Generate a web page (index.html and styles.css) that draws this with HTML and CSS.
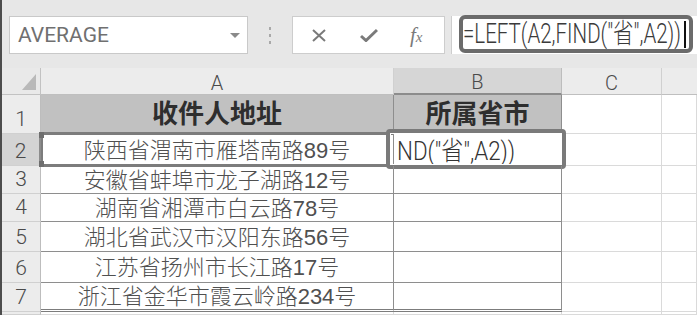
FILE: index.html
```html
<!DOCTYPE html>
<html>
<head>
    <title>AVERAGE - 收件人地址</title>
    <link rel="stylesheet" href="styles.css">
</head>
<body>
    <div class="window">
        <!-- Name box + formula bar -->
        <div class="toolbar">
            <div class="name-box">
                <span class="name-text">AVERAGE</span>
                <span class="caret"></span>
            </div>
            <div class="grip"><i></i><i></i><i></i></div>
            <div class="fx-buttons">
                <svg class="btn-icon" width="14" height="13" viewBox="0 0 14 13">
                    <path d="M1 1 L13 12 M13 1 L1 12" stroke="#7a7a7a" stroke-width="2" fill="none"/>
                </svg>
                <svg class="btn-icon" width="18" height="14" viewBox="0 0 18 14">
                    <path d="M1 8 L6 12.5 L17 2" stroke="#7a7a7a" stroke-width="3" fill="none"/>
                </svg>
                <span class="fx">f<span class="fx-x">x</span></span>
            </div>
            <div class="formula-bar">
                <div class="formula-edit">
                    <span class="formula-text">=LEFT(A2,FIND("省",A2))</span>
                    <span class="cursor"></span>
                </div>
            </div>
        </div>

        <!-- Worksheet -->
        <div class="sheet">
            <div class="corner"><span class="select-all"></span></div>
            <div class="col-head">A</div>
            <div class="col-head active">B</div>
            <div class="col-head">C</div>
            <div class="col-head last"></div>

            <div class="row-head">1</div>
            <div class="cell tbl title">收件人地址</div>
            <div class="cell tbl title">所属省市</div>
            <div class="cell"></div>
            <div class="cell"></div>

            <div class="row-head active">2</div>
            <div class="cell tbl ref">陕西省渭南市雁塔南路89号
                <span class="ref-box"><i class="h-top"></i><i class="h-bot"></i></span>
            </div>
            <div class="cell tbl editing">
                <span class="edit-text">ND("省",A2))</span>
                <span class="active-box"></span>
            </div>
            <div class="cell"></div>
            <div class="cell"></div>

            <div class="row-head">3</div>
            <div class="cell tbl">安徽省蚌埠市龙子湖路12号</div>
            <div class="cell tbl"></div>
            <div class="cell"></div>
            <div class="cell"></div>

            <div class="row-head">4</div>
            <div class="cell tbl">湖南省湘潭市白云路78号</div>
            <div class="cell tbl"></div>
            <div class="cell"></div>
            <div class="cell"></div>

            <div class="row-head">5</div>
            <div class="cell tbl">湖北省武汉市汉阳东路56号</div>
            <div class="cell tbl"></div>
            <div class="cell"></div>
            <div class="cell"></div>

            <div class="row-head">6</div>
            <div class="cell tbl">江苏省扬州市长江路17号</div>
            <div class="cell tbl"></div>
            <div class="cell"></div>
            <div class="cell"></div>

            <div class="row-head">7</div>
            <div class="cell tbl end">浙江省金华市霞云岭路234号</div>
            <div class="cell tbl end"></div>
            <div class="cell"></div>
            <div class="cell"></div>

            <div class="row-head"></div>
            <div class="cell"></div>
            <div class="cell"></div>
            <div class="cell"></div>
            <div class="cell"></div>
        </div>
    </div>
</body>
</html>
```

FILE: styles.css
```css
body {
    margin: 0;
    padding: 0;
    background: #e7e7e7;
    overflow: hidden;
    font-family: "Liberation Sans", "Noto Sans CJK SC", sans-serif;
}

.window {
    width: 697px;
    height: 315px;
    box-sizing: border-box;
    border-left: 2px solid #4d4d4d;
    overflow: hidden;
    display: flex;
    flex-direction: column;
}

/* ---------- toolbar ---------- */

.toolbar {
    height: 68px;
    flex-shrink: 0;
    display: flex;
    align-items: flex-start;
    padding: 16px 0 0 7px;
    box-sizing: border-box;
    background: #e7e7e7;
}

.name-box {
    width: 239px;
    height: 38px;
    box-sizing: border-box;
    background: #fff;
    border: 1px solid #c9c9c9;
    display: flex;
    align-items: center;
    padding: 0 7px 0 8px;
}

.name-text {
    font-family: Roboto, sans-serif;
    font-size: 21px;
    color: #707070;
    flex-grow: 1;
}

.caret {
    width: 0;
    height: 0;
    border-left: 5px solid transparent;
    border-right: 5px solid transparent;
    border-top: 5px solid #8a8a8a;
}

.grip {
    width: 44px;
    height: 38px;
    display: flex;
    flex-direction: column;
    align-items: center;
    justify-content: center;
    gap: 4px;
}

.grip i {
    width: 2px;
    height: 3px;
    background: #a9a9a9;
}

.fx-buttons {
    width: 153px;
    height: 38px;
    box-sizing: border-box;
    background: #fff;
    border: 1px solid #cdcdcd;
    display: flex;
    align-items: center;
    padding: 0 0 0 19px;
    gap: 34px;
}

.fx {
    font-family: "Liberation Serif", serif;
    font-style: italic;
    font-size: 21px;
    color: #7a7a7a;
    margin-left: -2px;
}

.fx-x {
    font-size: 15px;
}

.formula-bar {
    flex-grow: 1;
    height: 38px;
    margin-left: 6px;
    background: #fff;
    border-left: 1px solid #cdcdcd;
    padding-left: 7px;
}

.formula-edit {
    position: relative;
    width: 234px;
    height: 38px;
    margin-top: -1px;
    box-sizing: border-box;
    border: 4px solid #6b6b6b;
    border-radius: 6px;
    overflow: hidden;
    display: flex;
    align-items: center;
}

.formula-text {
    display: inline-block;
    font-family: Roboto, "Noto Sans CJK SC", sans-serif;
    font-size: 27px;
    font-weight: 300;
    line-height: 30px;
    color: #3a3a3a;
    white-space: nowrap;
    transform: scaleX(0.76);
    transform-origin: left center;
}

.cursor {
    position: absolute;
    right: 3px;
    top: 2px;
    width: 2px;
    height: 27px;
    background: #111;
}

/* ---------- worksheet ---------- */

.sheet {
    flex-grow: 1;
    display: grid;
    grid-template-columns: 39px 353px 168px 100px 1fr;
    grid-template-rows: 27px 39px 32px 28px 28px 30px 31px 29px 1fr;
    background: #fff;
}

.corner {
    background: #e9e9e9;
    border-right: 1px solid #c2c2c2;
    border-bottom: 1px solid #c2c2c2;
    display: flex;
    justify-content: flex-end;
    align-items: flex-end;
    padding: 0 4px 4px 0;
}

.select-all {
    width: 0;
    height: 0;
    border-left: 14px solid transparent;
    border-bottom: 16px solid #b9b9b9;
}

.col-head {
    background: #ececec;
    border-right: 1px solid #d0d0d0;
    border-bottom: 1px solid #bfbfbf;
    font-family: Roboto, sans-serif;
    font-size: 20px;
    font-weight: 300;
    line-height: 22px;
    color: #4a4a4a;
    display: flex;
    justify-content: center;
    align-items: center;
    padding-top: 3px;
    box-sizing: border-box;
}

.col-head.active {
    background: #d6d6d6;
    border-bottom: 2px solid #8c8c8c;
    border-right-color: #bdbdbd;
}

.col-head.last {
    border-right: none;
}

.row-head {
    background: #ececec;
    border-right: 1px solid #bdbdbd;
    border-bottom: 1px solid #d0d0d0;
    font-family: Roboto, sans-serif;
    font-size: 21px;
    font-weight: 300;
    line-height: 24px;
    color: #4a4a4a;
    display: flex;
    justify-content: center;
    align-items: flex-end;
    padding-bottom: 2px;
    box-sizing: border-box;
}

.row-head.active {
    background: #d4d4d4;
    border-right: 2px solid #8c8c8c;
}

.cell {
    border-right: 1px solid #dadada;
    border-bottom: 1px solid #dadada;
    box-sizing: border-box;
}

.cell.tbl {
    position: relative;
    border-right-color: #8e8e8e;
    border-bottom-color: #8e8e8e;
    font-family: "Liberation Sans", "Noto Sans CJK SC", sans-serif;
    font-size: 22px;
    font-weight: 300;
    line-height: 24px;
    color: #505050;
    display: flex;
    justify-content: center;
    align-items: center;
    padding-top: 2px;
    white-space: nowrap;
}

.cell.title {
    background: #c1c1c1;
    border-bottom: 2px solid #7c7c7c;
    font-size: 26px;
    font-weight: bold;
    line-height: 30px;
    color: #2e2e2e;
    padding-top: 0;
}

.cell.end {
    border-bottom: 3px double #7c7c7c;
}

/* range reference highlight on A2 */
.ref-box {
    position: absolute;
    left: 0;
    right: 0;
    top: -2px;
    bottom: -2px;
    border: 3px solid #7c7c7c;
    border-right: none;
    border-left-width: 2px;
}

.ref-box i {
    position: absolute;
    left: -4px;
    width: 5px;
    height: 6px;
    background: #6e6e6e;
}

.ref-box .h-top { top: -3px; }
.ref-box .h-bot { bottom: -3px; }

/* active cell B2 in edit mode */
.cell.editing {
    justify-content: flex-start;
    overflow: visible;
    padding-left: 3px;
}

.edit-text {
    display: inline-block;
    font-family: Roboto, "Noto Sans CJK SC", sans-serif;
    font-size: 26px;
    font-weight: 300;
    line-height: 28px;
    color: #333;
    transform: scaleX(0.86);
    transform-origin: left center;
}

.active-box {
    position: absolute;
    left: -8px;
    right: -5px;
    top: -5px;
    bottom: -4px;
    border: 4px solid #7a7a7a;
    border-radius: 4px;
    box-shadow: inset 0 0 0 1px #fff;
}
```
